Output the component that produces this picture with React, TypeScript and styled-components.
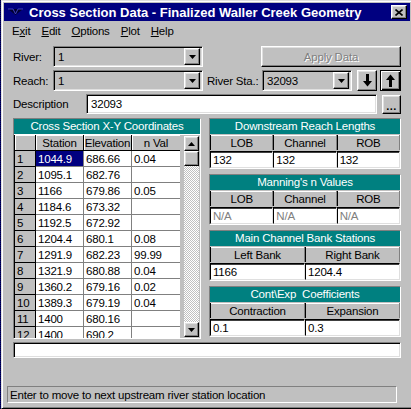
import React from "react"
import styled, { createGlobalStyle, css } from "styled-components"

const GlobalStyle = createGlobalStyle`
  html, body {
    margin: 0;
    padding: 0;
  }
  body {
    width: 411px;
    height: 409px;
    overflow: hidden;
    background-color: #000060;
    background-image: repeating-conic-gradient(#000080 0% 25%, #000030 0% 50%);
    background-size: 2px 2px;
    font-family: "Liberation Sans", Arial, sans-serif;
    font-size: 11px;
    letter-spacing: -0.2px;
    color: #000;
  }
`

const raised = css`
  border: 1px solid;
  border-color: #fff #000 #000 #fff;
  box-shadow: inset -1px -1px #808080, inset 1px 1px #dfdfdf;
`

const sunkenField = css`
  border: 1px solid;
  border-color: #808080 #fff #fff #808080;
  box-shadow: inset 1px 1px #000, inset -1px -1px #dfdfdf;
`

const Desktop = styled.div`
  padding-left: 1px;
  width: 411px;
  height: 409px;
  box-sizing: border-box;
`

const Window = styled.div`
  width: 412px;
  height: 409px;
  box-sizing: border-box;
  padding: 2px;
  background: #c0c0c0;
  border: 1px solid;
  border-color: #dfdfdf #000 #000 #dfdfdf;
  box-shadow: inset 1px 1px #fff, inset -1px -1px #808080;
  display: flex;
  flex-direction: column;
`

const TitleBar = styled.div`
  height: 18px;
  background: #000080;
  color: #fff;
  display: flex;
  align-items: center;
  padding: 0 3px 0 4px;
  gap: 6px;
  font-weight: bold;
  font-size: 13px;
  letter-spacing: 0;
`

const TitleText = styled.span`
  flex: 1;
  white-space: nowrap;
`

const CloseButton = styled.div`
  ${raised};
  width: 16px;
  height: 14px;
  box-sizing: border-box;
  background: #c0c0c0;
  display: flex;
  align-items: center;
  justify-content: center;
`

const MenuBar = styled.div`
  height: 20px;
  display: flex;
  align-items: center;
  padding-left: 2px;
`

const MenuItem = styled.span`
  padding: 0 5.5px;
  font-size: 11.5px;
  &:first-child {
    padding-left: 6px;
  }
`

const Accel = styled.span`
  text-decoration: underline;
`

const Client = styled.div`
  flex: 1;
  display: flex;
  flex-direction: column;
  padding: 5px 8px 0 9px;
`

const FormRow = styled.div<{ $gap?: number; $height: number }>`
  display: flex;
  align-items: center;
  height: ${(p) => p.$height}px;
  margin-bottom: ${(p) => p.$gap ?? 3}px;
`

const Label = styled.span<{ $width: number; $indent?: number }>`
  width: ${(p) => p.$width}px;
  margin-left: ${(p) => p.$indent ?? 0}px;
  flex-shrink: 0;
  font-size: 11.5px;
  white-space: nowrap;
`

const Combo = styled.div<{ $width: number }>`
  ${sunkenField};
  width: ${(p) => p.$width}px;
  height: 21px;
  box-sizing: border-box;
  background: #c0c0c0;
  display: flex;
  align-items: center;
  padding: 0 2px 0 4px;
  font-size: 11.5px;
`

const ComboValue = styled.span`
  flex: 1;
`

const DropButton = styled.div`
  ${raised};
  width: 16px;
  height: 17px;
  box-sizing: border-box;
  background: #c0c0c0;
  display: flex;
  align-items: center;
  justify-content: center;
`

const PushButton = styled.div<{ $width: number; $height?: number; $default?: boolean }>`
  ${raised};
  width: ${(p) => p.$width}px;
  height: ${(p) => p.$height ?? 21}px;
  box-sizing: border-box;
  flex-shrink: 0;
  background: #c0c0c0;
  display: flex;
  align-items: center;
  justify-content: center;
  ${(p) =>
    p.$default &&
    css`
      border: 1px solid #000;
      box-shadow: inset 1px 1px #fff, inset -1px -1px #000, inset -2px -2px #808080;
    `}
`

const DisabledText = styled.span`
  color: #808080;
  text-shadow: 1px 1px #fff;
  font-size: 11.5px;
`

const DotsText = styled.span`
  align-self: flex-end;
  font-weight: bold;
  line-height: 9px;
  padding-bottom: 2px;
  letter-spacing: 0.5px;
`

const TextField = styled.div<{ $width: number; $height: number }>`
  ${sunkenField};
  width: ${(p) => p.$width}px;
  height: ${(p) => p.$height}px;
  box-sizing: border-box;
  flex-shrink: 0;
  background: #fff;
  display: flex;
  align-items: center;
  padding-left: 4px;
  font-size: 11.5px;
`

const Body = styled.div`
  display: flex;
  gap: 8px;
  height: 221px;
  margin-bottom: 3px;
`

/* cross section table */

const GridPanel = styled.div`
  width: 188px;
  box-sizing: border-box;
  border: 1px solid;
  border-color: #808080 #fff #fff #808080;
  display: flex;
  flex-direction: column;
  overflow: hidden;
`

const TealTitle = styled.div`
  height: 15px;
  flex-shrink: 0;
  background: #008080;
  color: #fff;
  text-align: center;
  line-height: 15px;
  font-size: 11.5px;
  white-space: pre;
`

const GridBody = styled.div`
  flex: 1;
  display: flex;
  overflow: hidden;
  border-top: 1px solid #fff;
`

const Table = styled.div`
  width: 166px;
  display: grid;
  grid-template-columns: 21px 48px 48px 49px;
  grid-auto-rows: 16px;
  align-content: start;
  background: #fff;
  border-right: 1px solid #000;
  border-left: 1px solid #000;
  box-sizing: border-box;
`

const HeadCell = styled.div`
  background: #c0c0c0;
  border-right: 1px solid #000;
  border-bottom: 1px solid #000;
  box-shadow: inset 1px 1px #fff;
  display: flex;
  align-items: center;
  justify-content: center;
  font-size: 11.5px;
`

const RowHead = styled.div`
  background: #c0c0c0;
  border-right: 1px solid #000;
  border-bottom: 1px solid #000;
  display: flex;
  align-items: center;
  padding-left: 2px;
  font-size: 11.5px;
`

const Cell = styled.div<{ $selected?: boolean }>`
  border-right: 1px solid #808080;
  border-bottom: 1px solid #808080;
  display: flex;
  align-items: center;
  padding-left: 2px;
  font-size: 11.5px;
  background: ${(p) => (p.$selected ? "#000080" : "#fff")};
  color: ${(p) => (p.$selected ? "#fff" : "#000")};
`

const ScrollBar = styled.div`
  flex: 1;
  display: flex;
  flex-direction: column;
  padding: 1px 1px 1px 4px;
  background: #c0c0c0;
`

const ScrollButton = styled.div`
  ${raised};
  width: 15px;
  height: 15px;
  box-sizing: border-box;
  flex-shrink: 0;
  background: #c0c0c0;
  display: flex;
  align-items: center;
  justify-content: center;
`

const ScrollTrack = styled.div`
  flex: 1;
  width: 15px;
  background-image: repeating-conic-gradient(#fff 0% 25%, #c0c0c0 0% 50%);
  background-size: 2px 2px;
`

/* right hand panels */

const Panels = styled.div`
  width: 192px;
  display: flex;
  flex-direction: column;
  gap: 5px;
`

const Section = styled.div`
  height: 51px;
  box-sizing: border-box;
  border: 1px solid;
  border-color: #808080 #fff #fff #808080;
  display: flex;
  flex-direction: column;
  gap: 1px;
`

const SectionRow = styled.div<{ $cols: number; $height: number }>`
  display: grid;
  grid-template-columns: repeat(${(p) => p.$cols}, 1fr);
  height: ${(p) => p.$height}px;
`

const ColHead = styled.div`
  background: #c0c0c0;
  border-left: 1px solid #000;
  border-right: 1px solid #808080;
  box-shadow: inset 0 1px #fff;
  display: flex;
  align-items: center;
  justify-content: center;
  font-size: 11.5px;
`

const ValueBox = styled.div<{ $disabled?: boolean }>`
  background: #fff;
  border: 1px solid;
  border-color: #000 #dfdfdf #dfdfdf #000;
  box-shadow: inset 0 1px #404040;
  display: flex;
  align-items: center;
  padding-left: 2px;
  font-size: 11.5px;
  color: ${(p) => (p.$disabled ? "#808080" : "#000")};
`

const StatusBar = styled.div`
  margin: auto 5px 3px -6px;
  height: 17px;
  box-sizing: border-box;
  border: 1px solid;
  border-color: #808080 #fff #fff #808080;
  display: flex;
  align-items: center;
  padding-left: 2px;
  font-size: 11.5px;
  white-space: nowrap;
`

const Triangle = () => (
  <svg width="7" height="4" viewBox="0 0 7 4">
    <polygon points="0,0 7,0 3.5,4" fill="#000" />
  </svg>
)

const UpTriangle = () => (
  <svg width="7" height="4" viewBox="0 0 7 4">
    <polygon points="0,4 7,4 3.5,0" fill="#000" />
  </svg>
)

const ArrowDown = () => (
  <svg width="9" height="13" viewBox="0 0 9 13">
    <rect x="3" y="0" width="3" height="7" fill="#000" />
    <polygon points="0,7 9,7 4.5,12.5" fill="#000" />
  </svg>
)

const ArrowUp = () => (
  <svg width="9" height="13" viewBox="0 0 9 13">
    <rect x="3" y="6" width="3" height="7" fill="#000" />
    <polygon points="0,6 9,6 4.5,0.5" fill="#000" />
  </svg>
)

const CloseGlyph = () => (
  <svg width="8" height="7" viewBox="0 0 8 7">
    <path d="M0.5 0.5 L7.5 6.5 M7.5 0.5 L0.5 6.5" stroke="#000" strokeWidth="1.6" />
  </svg>
)

const AppIcon = () => (
  <svg width="15" height="10" viewBox="0 0 15 10">
    <polygon points="0,2 15,2 7.5,8" fill="#000030" />
    <polyline points="0,2 5,2 7.5,7 10,2 15,2" fill="none" stroke="#4040c0" strokeWidth="1" />
  </svg>
)

const rows: [string, string, string][] = [
  ["1044.9", "686.66", "0.04"],
  ["1095.1", "682.76", ""],
  ["1166", "679.86", "0.05"],
  ["1184.6", "673.32", ""],
  ["1192.5", "672.92", ""],
  ["1204.4", "680.1", "0.08"],
  ["1291.9", "682.23", "99.99"],
  ["1321.9", "680.88", "0.04"],
  ["1360.2", "679.16", "0.02"],
  ["1389.3", "679.19", "0.04"],
  ["1400", "680.16", ""],
  ["1400", "690.2", ""],
]

interface SectionProps {
  title: string
  heads: string[]
  values: string[]
  disabled?: boolean
}

function DataSection({ title, heads, values, disabled }: SectionProps) {
  return (
    <Section>
      <TealTitle>{title}</TealTitle>
      <SectionRow $cols={heads.length} $height={15}>
        {heads.map((h) => (
          <ColHead key={h}>{h}</ColHead>
        ))}
      </SectionRow>
      <SectionRow $cols={heads.length} $height={17}>
        {values.map((v, i) => (
          <ValueBox key={i} $disabled={disabled}>
            {v}
          </ValueBox>
        ))}
      </SectionRow>
    </Section>
  )
}

export default function App() {
  return (
    <Desktop>
      <GlobalStyle />
      <Window>
        <TitleBar>
          <AppIcon />
          <TitleText>Cross Section Data - Finalized Waller Creek Geometry</TitleText>
          <CloseButton>
            <CloseGlyph />
          </CloseButton>
        </TitleBar>
        <MenuBar>
          <MenuItem>
            E<Accel>x</Accel>it
          </MenuItem>
          <MenuItem>
            <Accel>E</Accel>dit
          </MenuItem>
          <MenuItem>
            <Accel>O</Accel>ptions
          </MenuItem>
          <MenuItem>
            <Accel>P</Accel>lot
          </MenuItem>
          <MenuItem>
            <Accel>H</Accel>elp
          </MenuItem>
        </MenuBar>
        <Client>
          <FormRow $height={21}>
            <Label $width={40}>River:</Label>
            <Combo $width={150}>
              <ComboValue>1</ComboValue>
              <DropButton>
                <Triangle />
              </DropButton>
            </Combo>
            <Label $width={58} />
            <PushButton $width={140}>
              <DisabledText>Apply Data</DisabledText>
            </PushButton>
          </FormRow>
          <FormRow $height={21}>
            <Label $width={40}>Reach:</Label>
            <Combo $width={150}>
              <ComboValue>1</ComboValue>
              <DropButton>
                <Triangle />
              </DropButton>
            </Combo>
            <Label $width={55} $indent={4}>
              River Sta.:
            </Label>
            <Combo $width={90}>
              <ComboValue>32093</ComboValue>
              <DropButton>
                <Triangle />
              </DropButton>
            </Combo>
            <Label $width={5} />
            <PushButton $width={20}>
              <ArrowDown />
            </PushButton>
            <Label $width={3} />
            <PushButton $width={21} $default>
              <ArrowUp />
            </PushButton>
          </FormRow>
          <FormRow $height={20} $gap={4}>
            <Label $width={73}>Description</Label>
            <TextField $width={291} $height={20}>
              32093
            </TextField>
            <Label $width={5} />
            <PushButton $width={19} $height={19}>
              <DotsText>...</DotsText>
            </PushButton>
          </FormRow>
          <Body>
            <GridPanel>
              <TealTitle>Cross Section X-Y Coordinates</TealTitle>
              <GridBody>
                <Table>
                  <HeadCell />
                  <HeadCell>Station</HeadCell>
                  <HeadCell>Elevation</HeadCell>
                  <HeadCell>n Val</HeadCell>
                  {rows.map((r, i) => (
                    <React.Fragment key={i}>
                      <RowHead>{i + 1}</RowHead>
                      <Cell $selected={i === 0}>{r[0]}</Cell>
                      <Cell>{r[1]}</Cell>
                      <Cell>{r[2]}</Cell>
                    </React.Fragment>
                  ))}
                </Table>
                <ScrollBar>
                  <ScrollButton>
                    <UpTriangle />
                  </ScrollButton>
                  <ScrollButton />
                  <ScrollTrack />
                  <ScrollButton>
                    <Triangle />
                  </ScrollButton>
                </ScrollBar>
              </GridBody>
            </GridPanel>
            <Panels>
              <DataSection
                title="Downstream Reach Lengths"
                heads={["LOB", "Channel", "ROB"]}
                values={["132", "132", "132"]}
              />
              <DataSection
                title="Manning's n Values"
                heads={["LOB", "Channel", "ROB"]}
                values={["N/A", "N/A", "N/A"]}
                disabled
              />
              <DataSection
                title="Main Channel Bank Stations"
                heads={["Left Bank", "Right Bank"]}
                values={["1166", "1204.4"]}
              />
              <DataSection
                title="Cont\Exp  Coefficients"
                heads={["Contraction", "Expansion"]}
                values={["0.1", "0.3"]}
              />
            </Panels>
          </Body>
          <TextField $width={388} $height={16} />
          <StatusBar>Enter to move to next upstream river station location</StatusBar>
        </Client>
      </Window>
    </Desktop>
  )
}
